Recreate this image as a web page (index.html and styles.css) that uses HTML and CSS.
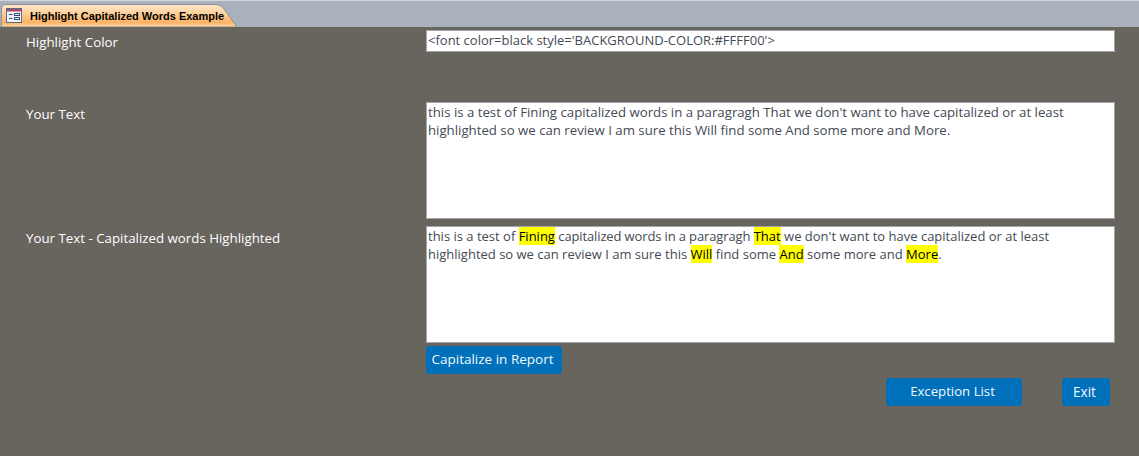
FILE: index.html
```html
<!DOCTYPE html>
<html lang="en">
<head>
<meta charset="utf-8">
<title>Highlight Capitalized Words Example</title>
<link rel="stylesheet" href="styles.css">
</head>
<body>
<div class="tabbar">
  <div class="tab">
    <svg class="tab-shape" width="238" height="24" viewBox="0 0 238 24" aria-hidden="true">
      <defs>
        <linearGradient id="tabfill" x1="0" y1="0" x2="0" y2="1">
          <stop offset="0" stop-color="#fde7cf"/>
          <stop offset="0.35" stop-color="#fdd3a0"/>
          <stop offset="0.8" stop-color="#fcb264"/>
          <stop offset="1" stop-color="#fdd9a6"/>
        </linearGradient>
      </defs>
      <path d="M1.500 24V6Q1.500 1.500 6 1.500H215Q221 1.500 224 6L237 24Z" fill="url(#tabfill)" stroke="#8d9299"/>
    </svg>
    <svg class="tab-icon" width="16" height="16" viewBox="0 0 16 16" aria-hidden="true">
      <rect x="0.500" y="0.500" width="15" height="14" fill="#f3f4fa" stroke="#5b6a8c"/>
      <rect x="1" y="1" width="14" height="2.500" fill="#a8496a"/>
      <path d="M3 6.500H6.500M3 10.500H6.500" stroke="#34496f"/>
      <rect x="8.500" y="5.500" width="5" height="2" fill="#fff" stroke="#34496f"/>
      <rect x="8.500" y="9.500" width="5" height="2" fill="#fff" stroke="#34496f"/>
    </svg>
    <span class="tab-title">Highlight Capitalized Words Example</span>
  </div>
</div>
<main class="form">
  <div class="row row-color">
    <div class="label">Highlight Color</div>
    <div class="field field-short">&lt;font color=black style='BACKGROUND-COLOR:#FFFF00'&gt;</div>
  </div>
  <div class="row row-text">
    <div class="label">Your Text</div>
    <div class="field field-tall field-plain">this is a test of Fining capitalized words in a paragragh That we don't want to have capitalized or at least highlighted so we can review I am sure this Will find some And some more and More.</div>
  </div>
  <div class="row row-result">
    <div class="label">Your Text - Capitalized words Highlighted</div>
    <div class="field field-tall">this is a test of <mark>Fining</mark> <span class="tight">capitalized words in a paragragh</span> <mark>That</mark> we don't want to have capitalized or at least highlighted so we can review I am sure this <mark>Will</mark> find some <mark>And</mark> some more and <mark>More</mark>.</div>
  </div>
  <div class="row row-report">
    <div></div>
    <div><button class="btn btn-report" type="button">Capitalize in Report</button></div>
  </div>
  <div class="actions">
    <button class="btn btn-exception" type="button">Exception List</button>
    <button class="btn btn-exit" type="button">Exit</button>
  </div>
</main>
</body>
</html>
```
FILE: styles.css
```css
* { box-sizing: border-box; }
html, body { margin: 0; height: 100%; }
body {
  width: 1139px;
  height: 456px;
  overflow: hidden;
  background: #68645e;
  font-family: "Open Sans", "Noto Sans", sans-serif;
  font-size: 13px;
  color: #fff;
}
.tabbar {
  height: 27px;
  padding-top: 2px;
  background: #a9b1bc;
  border-top: 1px solid #d3d7dc;
}
.tab {
  position: relative;
  width: 238px;
  height: 24px;
  display: flex;
  align-items: center;
  padding: 2px 0 0 6px;
  gap: 8px;
}
.tab-shape { position: absolute; left: 0; top: 0; }
.tab-icon, .tab-title { position: relative; }
.tab-title {
  font: bold 11px/14px "Liberation Sans", Arial, sans-serif;
  color: #000;
  white-space: nowrap;
}
.form { padding: 3px 24px 0 26px; }
.row {
  display: grid;
  grid-template-columns: 400px 689px;
}
.row-text { margin-top: 50px; }
.row-result { margin-top: 7px; }
.row-report { margin-top: 3px; }
.label { font-size: 13.3px; line-height: 18px; padding-top: 3px; color: #fff; }
.field {
  background: #fff;
  border: 1px solid #a6a6a6;
  color: #444a55;
  padding: 0 1px;
  line-height: 18px;
  overflow: hidden;
}
.field-short { height: 22px; white-space: nowrap; }
.field-tall { height: 117px; }
.field-plain { font-size: 13.22px; }
.tight { letter-spacing: -0.13px; }
mark { background: #ffff00; color: #000; }
.btn {
  display: block;
  height: 28px;
  padding: 0 3px 2px 0;
  border: 0;
  border-radius: 3px;
  background: #0070ba;
  color: #f2f8fc;
  font: 13.2px "Open Sans", "Noto Sans", sans-serif;
}
.btn-report { width: 136px; font-size: 13.5px; }
.actions {
  display: flex;
  margin-top: 4px;
  padding-left: 860px;
  gap: 40px;
}
.btn-exception { width: 136px; }
.btn-exit { width: 48px; font-size: 13.6px; }
```
